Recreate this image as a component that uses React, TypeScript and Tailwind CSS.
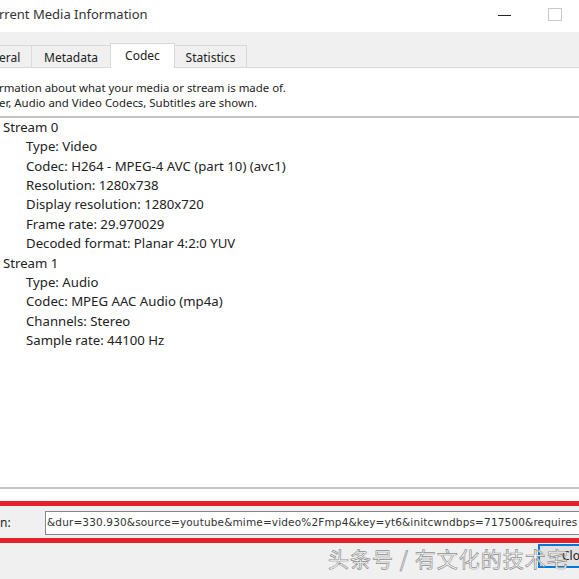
import React from "react";

const streams = [
  {
    name: "Stream 0",
    items: [
      "Type: Video",
      "Codec: H264 - MPEG-4 AVC (part 10) (avc1)",
      "Resolution: 1280x738",
      "Display resolution: 1280x720",
      "Frame rate: 29.970029",
      "Decoded format: Planar 4:2:0 YUV",
    ],
  },
  {
    name: "Stream 1",
    items: [
      "Type: Audio",
      "Codec: MPEG AAC Audio (mp4a)",
      "Channels: Stereo",
      "Sample rate: 44100 Hz",
    ],
  },
];

export default function App() {
  return (
    <div className="relative w-[579px] h-[579px] overflow-hidden bg-white flex flex-col text-[#222] font-['Noto_Sans','Open_Sans',sans-serif]">
      {/* Title bar */}
      <div className="h-[32px] shrink-0 flex items-center justify-between">
        <span className="text-[13px] -ml-px text-[#333] -mt-[2px]">rrent Media Information</span>
        <div className="flex items-center h-full">
          <div className="w-[13px] h-px bg-[#222] mr-[37px] mt-[-1px]" />
          <div className="w-[14px] h-[13px] border border-[#c8c8c8] mr-[17px] mt-[-4px]" />
        </div>
      </div>

      {/* Tabs */}
      <div className="h-[36px] shrink-0 bg-[#f0f0f0] border-b border-[#d9d9d9] flex items-end text-[12px]">
        <div className="w-[32px] h-[22px] border-t border-r border-[#d9d9d9] flex items-center pt-[2px]">
          <span className="-ml-px">eral</span>
        </div>
        <div className="w-[79px] h-[22px] border-t border-r border-[#d9d9d9] flex items-center justify-center pt-[2px]">
          Metadata
        </div>
        <div className="w-[65px] h-[25px] -mb-px bg-white border-t border-x border-[#d9d9d9] -ml-px flex items-center justify-center pb-[1px]">
          Codec
        </div>
        <div className="w-[72px] h-[22px] border-t border-r border-[#d9d9d9] flex items-center justify-center pt-[2px]">
          Statistics
        </div>
      </div>

      {/* Description */}
      <div className="h-[48px] shrink-0 pt-[12px] text-[11.4px] leading-[15px]">
        <div className="-ml-px">rmation about what your media or stream is made of.</div>
        <div className="-ml-px">er, Audio and Video Codecs, Subtitles are shown.</div>
      </div>

      {/* Tree */}
      <div className="h-[373px] shrink-0 border-t-2 border-b-2 border-[#c4c4c4] text-[13.2px]">
        {streams.map((s) => (
          <div key={s.name}>
            <div className="h-[19.4px] flex items-center pl-[3px]">{s.name}</div>
            {s.items.map((it) => (
              <div key={it} className="h-[19.4px] flex items-center pl-[26px]">
                {it}
              </div>
            ))}
          </div>
        ))}
      </div>

      {/* Location row */}
      <div className="h-[12px] shrink-0 bg-white" />
      <div className="h-[5px] shrink-0 bg-[#e5202a]" />
      <div className="h-[32px] shrink-0 bg-[#f0f0f0] flex items-center pt-[2px]">
        <span className="text-[12px] w-[45px] shrink-0">n:</span>
        <div className="h-[24px] flex-1 bg-white border border-[#828790] border-r-0 flex items-center overflow-hidden whitespace-nowrap text-[10.5px] pl-px font-['DejaVu_Sans',sans-serif] text-[#333] tracking-[0.15px]">
          &amp;dur=330.930&amp;source=youtube&amp;mime=video%2Fmp4&amp;key=yt6&amp;initcwndbps=717500&amp;requires
        </div>
      </div>
      <div className="h-[5px] shrink-0 bg-[#e5202a]" />

      {/* Bottom buttons */}
      <div className="flex-1 bg-[#f0f0f0] flex justify-end items-start pt-[1px]">
        <div className="w-[50px] h-[24px] -mr-[9px] bg-[#e1e1e1] border-2 border-[#0078d7] text-[12px] pl-[22px] flex items-center">
          Close
        </div>
      </div>

      {/* Watermark */}
      <div className="absolute left-[328px] top-[543px] text-[21px] tracking-[1px] text-white whitespace-nowrap font-['Noto_Sans_CJK_SC',sans-serif] [-webkit-text-stroke:0.7px_#8d8d8d]">
        头条号 / 有文化的技术宅
      </div>
    </div>
  );
}
